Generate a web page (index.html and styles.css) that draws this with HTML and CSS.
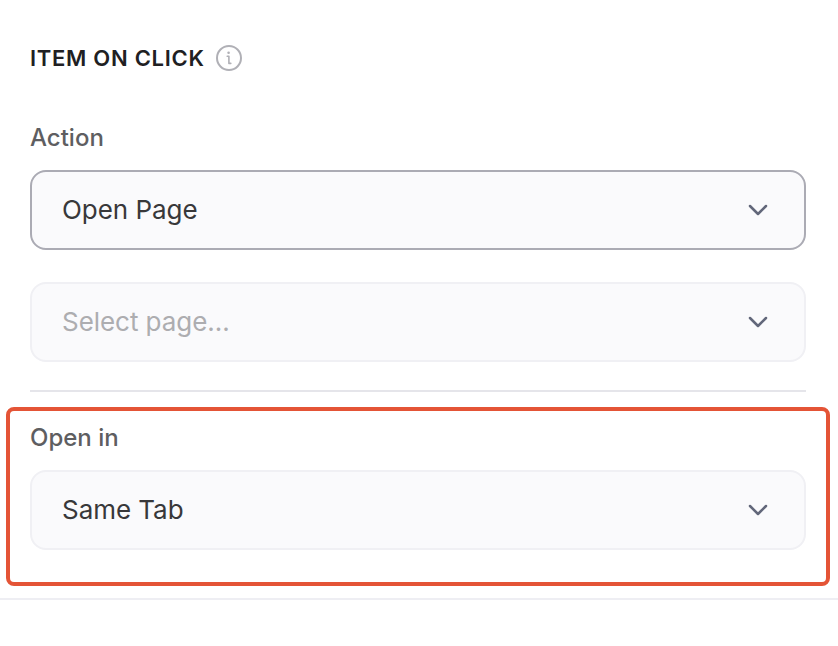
FILE: index.html
```html
<!DOCTYPE html>
<html lang="en">
<head>
<meta charset="utf-8">
<title>Item on click</title>
<link rel="stylesheet" href="styles.css">
</head>
<body>
<main class="panel">
  <header class="heading">
    <h1>ITEM ON CLICK</h1>
    <svg class="info" viewBox="0 0 26 26" fill="none" stroke="#b0b0b6" stroke-width="2"><circle cx="13" cy="13" r="12"/><path d="M11.2 11.2h1.7v7.2h1.9" stroke-width="1.6" stroke-linecap="round" stroke-linejoin="round"/><circle cx="12.6" cy="7.7" r="1.3" fill="#b0b0b6" stroke="none"/></svg>
  </header>
  <section class="group">
    <div class="label">Action</div>
    <div class="select active"><span>Open Page</span><svg class="chevron" viewBox="0 0 20 12"><path d="M2 2l8 8 8-8"/></svg></div>
    <div class="select empty"><span>Select page...</span><svg class="chevron" viewBox="0 0 20 12"><path d="M2 2l8 8 8-8"/></svg></div>
  </section>
  <hr class="divider">
  <section class="highlight">
    <div class="label">Open in</div>
    <div class="select"><span>Same Tab</span><svg class="chevron" viewBox="0 0 20 12"><path d="M2 2l8 8 8-8"/></svg></div>
  </section>
</main>
</body>
</html>
```
FILE: styles.css
```css
* { box-sizing: border-box; }
body { margin: 0; background: #fff; font-family: Inter, "Liberation Sans", sans-serif; }
.panel { height: 600px; padding-top: 43px; border-bottom: 2px solid #eeeef3; }
.heading { display: flex; align-items: center; height: 30px; margin-left: 30px; gap: 11px; }
h1 { margin: 0; font-size: 22px; line-height: 30px; font-weight: 600; letter-spacing: 0.72px; color: #202022; }
.info { width: 26px; height: 26px; }
.group { margin: 49px 32px 0 30px; }
.label { height: 30px; line-height: 32px; font-size: 24px; font-weight: 500; color: #5e5e61; }
.select { display: flex; align-items: center; justify-content: space-between; height: 80px; margin-top: 18px; padding: 0 36px 0 30px; border: 2px solid #f0f0f4; border-radius: 16px; background: #fafafc; color: #38383a; font-size: 26px; }
.select span { padding-bottom: 2px; letter-spacing: -0.05px; }
.active { border-color: #ababb4; }
.select.empty { margin-top: 32px; color: #adadb0; }
.chevron { width: 20px; height: 12px; fill: none; stroke: #62677a; stroke-width: 2.5; stroke-linecap: round; stroke-linejoin: round; }
.divider { height: 2px; margin: 28px 32px 0 30px; border: 0; background: #e5e5ea; }
.highlight { height: 179px; margin: 15px 8px 0 6px; padding: 11px 20px 0; border: 4px solid #e45436; border-radius: 8px; }
```
